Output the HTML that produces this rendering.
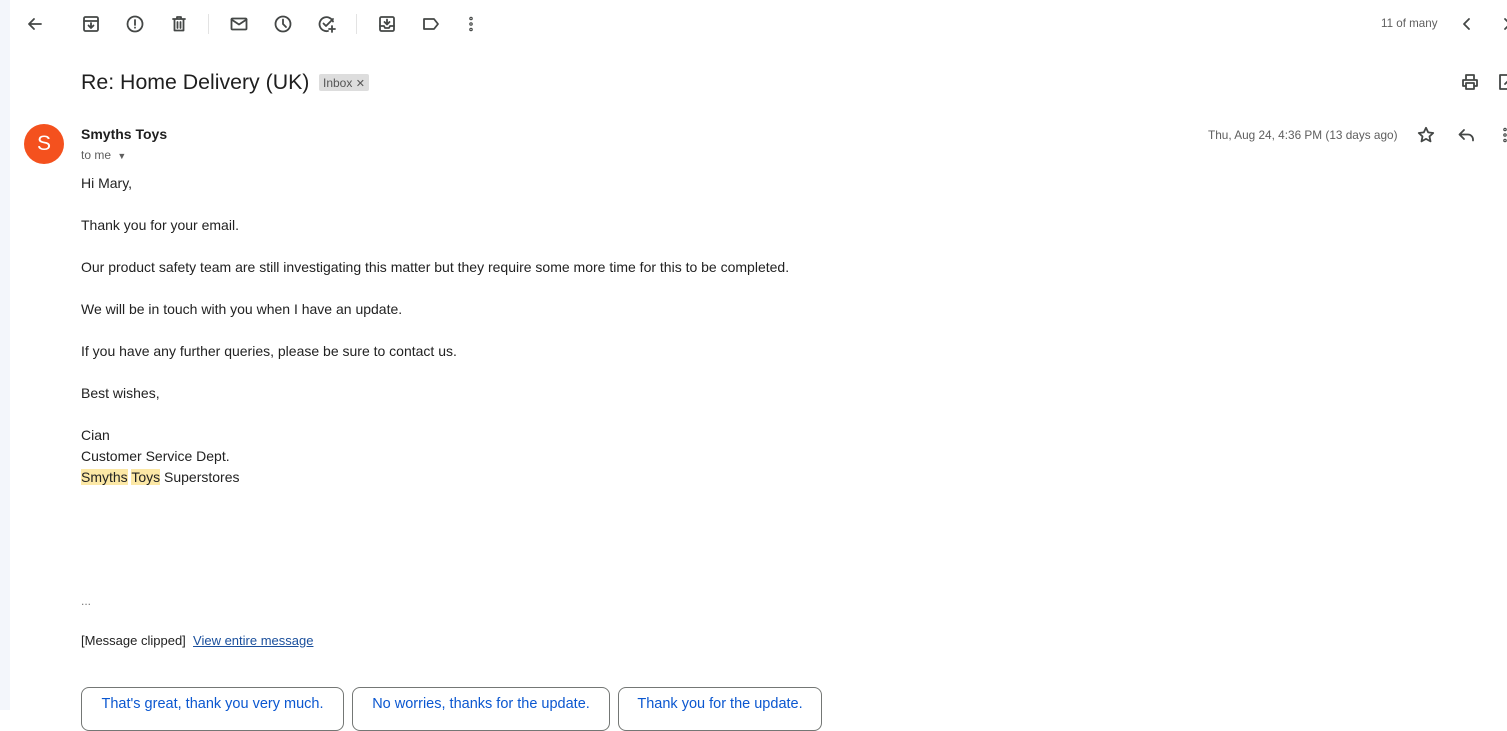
<!DOCTYPE html>
<html><head><meta charset="utf-8"><style>
*{margin:0;padding:0;box-sizing:border-box}
body{width:1507px;height:710px;overflow:hidden;background:#fff;font-family:"Liberation Sans",Arial,sans-serif;color:#1f1f1f;position:relative}
.strip{position:absolute;left:0;top:0;width:10px;height:710px;background:#f3f6fb}
.ic{position:absolute;width:20px;height:20px}
.ic svg{width:20px;height:20px;fill:none;stroke:#444746;stroke-width:1.8;stroke-linecap:round;stroke-linejoin:round}
.sep{position:absolute;top:14px;width:1px;height:20px;background:#e3e3e3}
.abs{position:absolute;white-space:nowrap}
.body{position:absolute;left:81px;top:173px;font-size:14px;line-height:21px;color:#222}
.body p{margin:0}
.hl{background:#fce8a6}
.btn{position:absolute;top:687px;height:44px;border:1px solid #747775;border-radius:8px;color:#0b57d0;font-size:14.5px;padding-top:8px;text-align:center}
</style></head><body>
<div class="strip"></div>
<div class="ic" style="left:25px;top:14px"><svg viewBox="0 0 20 20"><path d="M16 10H4M9 5l-5 5 5 5"/></svg></div>
<div class="ic" style="left:81px;top:14px"><svg viewBox="0 0 20 20"><rect x="3" y="3" width="14" height="14" rx="1.5"/><path d="M3 7h14M10 9v5M7.5 11.5 10 14l2.5-2.5"/></svg></div>
<div class="ic" style="left:125px;top:14px"><svg viewBox="0 0 20 20"><circle cx="10" cy="10" r="7.5"/><path d="M10 6v5M10 13.5v.3"/></svg></div>
<div class="ic" style="left:169px;top:14px"><svg viewBox="0 0 20 20"><path d="M4 5h12M8 5V3h4v2M5.5 5v11.5h9V5M8.5 8v6M11.5 8v6"/></svg></div>
<div class="sep" style="left:208px"></div>
<div class="ic" style="left:229px;top:14px"><svg viewBox="0 0 20 20"><rect x="2.5" y="4.5" width="15" height="11" rx="1"/><path d="M2.5 5.5 10 10.5l7.5-5"/></svg></div>
<div class="ic" style="left:273px;top:14px"><svg viewBox="0 0 20 20"><circle cx="10" cy="10" r="7.5"/><path d="M10 5.5V10l3 3"/></svg></div>
<div class="ic" style="left:317px;top:14px"><svg viewBox="0 0 20 20"><path d="M16 7.5A7 7 0 1 0 11 17"/><path d="M6.5 9.5l2.5 2.5 7-7M15 12v6M12 15h6"/></svg></div>
<div class="sep" style="left:356px"></div>
<div class="ic" style="left:377px;top:14px"><svg viewBox="0 0 20 20"><rect x="3" y="3" width="14" height="14" rx="1.5"/><path d="M3 12h4l1 2h4l1-2h4M10 5.5v5M7.5 8 10 10.5 12.5 8"/></svg></div>
<div class="ic" style="left:421px;top:14px"><svg viewBox="0 0 20 20"><path d="M3 5h10l4 5-4 5H3z"/></svg></div>
<div class="ic" style="left:461px;top:14px"><svg viewBox="0 0 20 20"><circle cx="10" cy="4.5" r=".6" stroke-width="2.4"/><circle cx="10" cy="10" r=".6" stroke-width="2.4"/><circle cx="10" cy="15.5" r=".6" stroke-width="2.4"/></svg></div>
<div class="abs" style="left:1381px;top:17px;font-size:11.6px;color:#5e5e5e">11 of many</div>
<div class="ic" style="left:1457px;top:14px"><svg viewBox="0 0 20 20"><path d="M12 5l-5 5 5 5"/></svg></div>
<div class="ic" style="left:1497px;top:14px"><svg viewBox="0 0 20 20"><path d="M8 5l5 5-5 5"/></svg></div>
<div class="abs" style="left:81px;top:70px;font-size:21.3px;color:#1f1f1f">Re: Home Delivery (UK)</div>
<div class="abs" style="left:319px;top:74px;height:17px;width:50px;background:#ddd;border-radius:2px;font-size:12px;color:#555;padding:2px 0 0 4px">Inbox <span style="font-size:11px">✕</span></div>
<div class="ic" style="left:1460px;top:72px"><svg viewBox="0 0 20 20"><path d="M6 7V3h8v4M6 14H3V8h14v6h-3M6 11h8v6H6z"/></svg></div>
<div class="ic" style="left:1497px;top:72px"><svg viewBox="0 0 20 20"><path d="M10 3H3v14h14v-7M8 12l8-8"/></svg></div>
<div class="abs" style="left:24px;top:124px;width:40px;height:40px;border-radius:50%;background:#f4511e;color:#fff;font-size:21px;text-align:center;line-height:40px">S</div>
<div class="abs" style="left:81px;top:126px;font-size:14px;font-weight:bold;color:#1f1f1f">Smyths Toys</div>
<div class="abs" style="left:81px;top:148px;font-size:12px;color:#5e5e5e">to me <span style="font-size:9px;margin-left:3px">▼</span></div>
<div class="abs" style="left:1208px;top:128px;font-size:11.8px;color:#5e5e5e">Thu, Aug 24, 4:36 PM (13 days ago)</div>
<div class="ic" style="left:1416px;top:125px"><svg viewBox="0 0 20 20"><path d="M10 2.8l2.2 4.6 5 .6-3.7 3.4 1 5-4.5-2.5-4.5 2.5 1-5L2.8 8l5-.6z"/></svg></div>
<div class="ic" style="left:1456px;top:125px"><svg viewBox="0 0 20 20"><path d="M8 5 3.5 9.5 8 14M3.5 9.5H12a5 5 0 0 1 5 5v1"/></svg></div>
<div class="ic" style="left:1495px;top:125px"><svg viewBox="0 0 20 20"><circle cx="10" cy="4.5" r=".6" stroke-width="2.4"/><circle cx="10" cy="10" r=".6" stroke-width="2.4"/><circle cx="10" cy="15.5" r=".6" stroke-width="2.4"/></svg></div>
<div class="body">
<p>Hi Mary,</p><p>&nbsp;</p>
<p>Thank you for your email.</p><p>&nbsp;</p>
<p>Our product safety team are still investigating this matter but they require some more time for this to be completed.</p><p>&nbsp;</p>
<p>We will be in touch with you when I have an update.</p><p>&nbsp;</p>
<p>If you have any further queries, please be sure to contact us.</p><p>&nbsp;</p>
<p>Best wishes,</p><p>&nbsp;</p>
<p>Cian</p>
<p>Customer Service Dept.</p>
<p><span class="hl">Smyths</span> <span class="hl">Toys</span> Superstores</p>
</div>
<div class="abs" style="left:81px;top:594px;font-size:12px;color:#777">...</div>
<div class="abs" style="left:81px;top:633px;font-size:13px;color:#222">[Message clipped]&nbsp;&nbsp;<span style="color:#1a4f9c;text-decoration:underline">View entire message</span></div>
<div class="btn" style="left:81px;width:263px">That's great, thank you very much.</div>
<div class="btn" style="left:352px;width:258px">No worries, thanks for the update.</div>
<div class="btn" style="left:618px;width:204px">Thank you for the update.</div>
</body></html>
